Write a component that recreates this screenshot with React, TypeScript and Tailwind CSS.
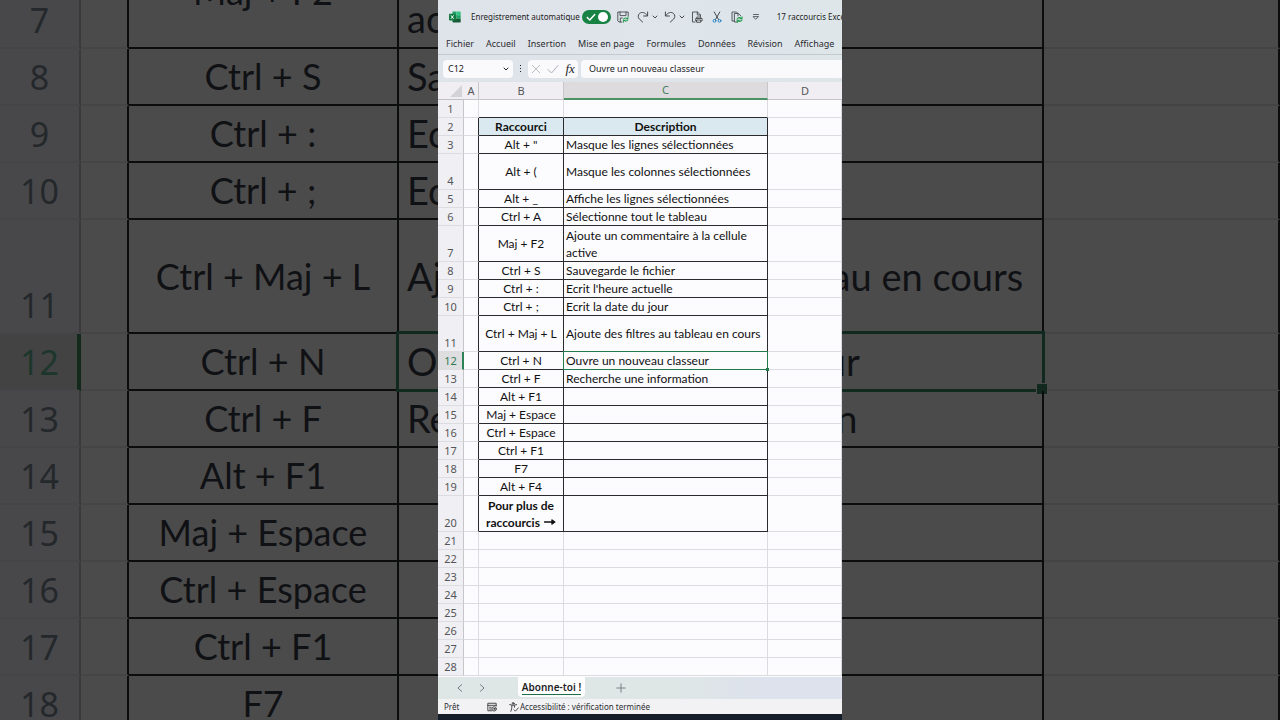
import type { ReactNode } from 'react';

type Row = {
  n: number;
  shortcut?: string;
  description?: string;
  tall?: boolean;
};

const rows: Row[] = [
  { n: 3, shortcut: 'Alt + "', description: 'Masque les lignes sélectionnées' },
  { n: 4, shortcut: 'Alt + (', description: 'Masque les colonnes sélectionnées', tall: true },
  { n: 5, shortcut: 'Alt + _', description: 'Affiche les lignes sélectionnées' },
  { n: 6, shortcut: 'Ctrl + A', description: 'Sélectionne tout le tableau' },
  { n: 7, shortcut: 'Maj + F2', description: 'Ajoute un commentaire à la cellule active', tall: true },
  { n: 8, shortcut: 'Ctrl + S', description: 'Sauvegarde le fichier' },
  { n: 9, shortcut: 'Ctrl + :', description: "Ecrit l'heure actuelle" },
  { n: 10, shortcut: 'Ctrl + ;', description: 'Ecrit la date du jour' },
  { n: 11, shortcut: 'Ctrl + Maj + L', description: 'Ajoute des filtres au tableau en cours', tall: true },
  { n: 12, shortcut: 'Ctrl + N', description: 'Ouvre un nouveau classeur' },
  { n: 13, shortcut: 'Ctrl + F', description: 'Recherche une information' },
  { n: 14, shortcut: 'Alt + F1' },
  { n: 15, shortcut: 'Maj + Espace' },
  { n: 16, shortcut: 'Ctrl + Espace' },
  { n: 17, shortcut: 'Ctrl + F1' },
  { n: 18, shortcut: 'F7' },
  { n: 19, shortcut: 'Alt + F4' },
];

const emptyRows = [21, 22, 23, 24, 25, 26, 27, 28];
const backdropRows = rows.filter((row) => row.n >= 7 && row.n <= 18);
const ribbonTabs = ['Fichier', 'Accueil', 'Insertion', 'Mise en page', 'Formules', 'Données', 'Révision', 'Affichage'];

const SELECTED = 12;

function Icon({ children, className = 'size-3' }: { children: ReactNode; className?: string }) {
  return (
    <svg
      viewBox="0 0 12 12"
      className={`shrink-0 ${className}`}
      fill="none"
      stroke="currentColor"
      strokeLinecap="round"
      strokeLinejoin="round"
      aria-hidden="true"
    >
      {children}
    </svg>
  );
}

function ExcelLogo() {
  return (
    <svg viewBox="0 0 12 12" className="size-3 shrink-0" aria-hidden="true">
      <path d="M3.5 0.5h4v3.7h-4z" fill="#21a366" />
      <path d="M7.5 0.5H11q.7 0 .7.7v3H7.5z" fill="#33c481" />
      <path d="M3.5 4.2h4v3.6h-4z" fill="#107c41" />
      <path d="M7.5 4.2h4.2v3.6H7.5z" fill="#21a366" />
      <path d="M3.5 7.8h8.2v3q0 .7-.7.7H4.2q-.7 0-.7-.7z" fill="#185c37" />
      <rect x="0" y="2.8" width="6.6" height="6.6" rx=".7" fill="#107c41" />
      <path d="M2 4.4l2.6 3.4M4.6 4.4L2 7.8" stroke="#fff" strokeWidth="1" />
    </svg>
  );
}

function Caret() {
  return (
    <Icon className="size-1.5">
      <path d="M2 4l4 4 4-4" strokeWidth="2" />
    </Icon>
  );
}

function TitleBar() {
  return (
    <div className="flex h-[33px] items-center pl-[11px] text-[#45494d]">
      <ExcelLogo />
      <label className="ml-2.5 flex shrink-0 items-center gap-0.5 whitespace-nowrap text-[8px] text-[#222]">
        Enregistrement automatique
        <span className="relative flex h-3.5 w-[29px] shrink-0 items-center rounded-full bg-[#178243]">
          <input type="checkbox" defaultChecked className="absolute inset-0 cursor-pointer appearance-none rounded-full" />
          <Icon className="pointer-events-none ml-1 size-2.5 text-white">
            <path d="M1.5 6.5l3 3 6-6.5" strokeWidth="1.8" />
          </Icon>
          <span className="pointer-events-none ml-0.5 size-2.5 rounded-full bg-white" />
        </span>
      </label>
      <div className="ml-1.5 flex shrink-0 items-center">
        <button aria-label="Enregistrer">
          <Icon>
            <path d="M4.8 11H2L.8 9.8V1h10.4v4M3 1v3.6h6V1M3.3 11V7h2" strokeWidth=".9" />
            <path d="M6.3 8q2.2-2.4 4.4-.3M11 5.8v2H9M11 9.2q-2.2 2.4-4.4.2M6.4 11.3v-2h2" stroke="#249b4b" strokeWidth="1" />
          </Icon>
        </button>
        <button aria-label="Rétablir" className="ml-2 flex items-center gap-[3px]">
          <Icon>
            <path d="M10.6 1v4h-4M10.4 4.7C8 .9 4.4.9 2.6 2.4C.8 4 .8 6.5 2.3 8L5.6 11" strokeWidth="1" />
          </Icon>
          <Caret />
        </button>
        <button aria-label="Annuler" className="ml-1.5 flex items-center gap-[3px]">
          <Icon>
            <path d="M1.4 1v4h4M1.6 4.7C4 .9 7.6.9 9.4 2.4C11.2 4 11.2 6.5 9.7 8L6.4 11" strokeWidth="1" />
          </Icon>
          <Caret />
        </button>
        <button aria-label="Aperçu avant impression" className="ml-1.5">
          <Icon>
            <path d="M4 11H1.5V1h5l3 3v1.5M6.3 1v3h3M5.8 7.5V6h4v1.5M5.800 10H4.700V7.500h6.400V10H9.800M6 9h3.600v2.300H6z" strokeWidth=".9" />
          </Icon>
        </button>
        <button aria-label="Couper" className="ml-2">
          <Icon>
            <path d="M3.2 1l4.3 7.500M8.800 1L4.500 8.500" strokeWidth="1" />
            <circle cx="3.5" cy="9.8" r="1.4" stroke="#2583c4" />
            <circle cx="8.5" cy="9.8" r="1.4" stroke="#2583c4" />
          </Icon>
        </button>
        <button aria-label="Actualiser la copie" className="ml-2">
          <Icon>
            <path d="M3 10H1V1h4.5l1 1M5.5 11H3.400V2.500h4l2.300 2.300M7 2.700v2.200" strokeWidth=".9" />
            <path d="M6 8q2.200-2.600 4.600-.3M11 5.700v2.100H9M11 9.200q-2.200 2.400-4.600.2M6.200 11.400v-2h2" stroke="#249b4b" strokeWidth="1.1" />
          </Icon>
        </button>
        <button aria-label="Personnaliser la barre d'outils" className="ml-2">
          <Icon className="size-2.5">
            <path d="M3 3h6M3 5.5h6L6 8.5z" strokeWidth="1" />
          </Icon>
        </button>
      </div>
      <span className="ml-4 whitespace-nowrap text-[8px] text-[#222]">17 raccourcis Excel</span>
    </div>
  );
}

function Ribbon() {
  return (
    <nav className="flex h-[22px] items-center gap-3 border-b border-[#c3c9ce] pl-2 text-[9px] text-[#2b2d30]">
      {ribbonTabs.map((tab) => (
        <button key={tab} className="whitespace-nowrap">{tab}</button>
      ))}
    </nav>
  );
}

function FormulaBar() {
  return (
    <div className="flex h-[27px] items-center pl-[5px] text-[#222]">
      <div className="flex h-[18px] w-[70px] shrink-0 items-center rounded-sm bg-[#fafafd] pr-1">
        <input aria-label="Zone Nom" defaultValue="C12" className="w-full min-w-0 bg-transparent pl-[5px] text-[9px] outline-none" />
        <button aria-label="Liste des noms"><Caret /></button>
      </div>
      <span className="flex w-[15px] shrink-0 flex-col items-center gap-0.5">
        <i className="size-px bg-[#222]" />
        <i className="size-px bg-[#222]" />
        <i className="size-px bg-[#222]" />
      </span>
      <div className="flex h-[18px] w-[50px] shrink-0 items-center justify-around rounded-sm bg-[#fafafd] text-[#b0b0b4]">
        <button aria-label="Annuler la saisie">
          <Icon className="size-2.5"><path d="M1.5 1.5l9 9M10.5 1.5l-9 9" /></Icon>
        </button>
        <button aria-label="Valider la saisie">
          <Icon><path d="M1 6.5l3.5 3.5L11 2.5" /></Icon>
        </button>
        <button aria-label="Insérer une fonction" className="font-['Liberation_Serif',serif] text-[13px] italic leading-none text-[#222]">
          fx
        </button>
      </div>
      <input
        aria-label="Barre de formule"
        defaultValue="Ouvre un nouveau classeur"
        className="ml-[3px] h-[18px] min-w-0 flex-1 rounded-l-sm bg-[#fafafd] pl-2 text-[9px] outline-none"
      />
    </div>
  );
}

const numberCell = "border-r border-b border-r-[#c6c5c9] border-b-[#dddce0] bg-[#f0eff3] p-0 text-center align-bottom font-['Noto_Sans',sans-serif] text-[11px] font-normal leading-[17px] text-[#55565a]";
const gridCell = 'border-r border-b border-[#dcdbdf] p-0';
const inkCell = 'border-r border-b border-[#2a2a2e] p-0';

function Sheet() {
  return (
    <table className="w-full table-fixed border-separate border-spacing-0 bg-[#fcfbfe] font-['Lato',sans-serif] text-[12px] leading-[18px] text-[#111]">
      <colgroup>
        <col className="w-[26px]" />
        <col className="w-[15px]" />
        <col className="w-[85px]" />
        <col className="w-[204px]" />
        <col />
      </colgroup>
      <thead>
        <tr className="h-[18px] bg-[#f0eef2] font-['Noto_Sans',sans-serif] text-[11px] leading-[17px] text-[#55565a]">
          <th className="border-b border-[#c0bfc3] p-0" aria-label="Tout sélectionner">
            <svg viewBox="0 0 12 12" className="ml-auto mr-0.5 size-3" aria-hidden="true">
              <path d="M12 0v12H0z" fill="#d3d2d6" />
            </svg>
          </th>
          <th className="border-b border-r border-[#c6c5c9] p-0 font-normal">A</th>
          <th className="border-b border-r border-[#c6c5c9] p-0 font-normal">B</th>
          <th className="border-b-2 border-r border-r-[#c6c5c9] border-b-[#4a9163] bg-[#dedbdf] p-0 font-normal leading-4 text-[#3f7d5b]">C</th>
          <th className="border-b border-[#c6c5c9] p-0 font-normal">D</th>
        </tr>
      </thead>
      <tbody>
        <tr className="h-[18px]">
          <th className={numberCell}>1</th>
          <td className={gridCell} />
          <td className="border-r border-b border-r-[#dcdbdf] border-b-[#2a2a2e] p-0" />
          <td className="border-r border-b border-r-[#dcdbdf] border-b-[#2a2a2e] p-0" />
          <td className={gridCell} />
        </tr>
        <tr className="h-[18px]">
          <th className={numberCell}>2</th>
          <td className="border-r border-b border-r-[#2a2a2e] border-b-[#dcdbdf] p-0" />
          <th className={`${inkCell} bg-[#d9e9ef] leading-[17px]`}>Raccourci</th>
          <th className={`${inkCell} bg-[#d9e9ef] leading-[17px]`}>Description</th>
          <td className={gridCell} />
        </tr>
        {rows.map((row) => (
          <tr key={row.n} className={row.tall ? 'h-9' : 'h-[18px]'}>
            {row.n === SELECTED ? (
              <th className="border-b border-r-2 border-b-[#dddce0] border-r-[#2f8257] bg-[#dedde0] p-0 pl-px text-center align-bottom font-['Noto_Sans',sans-serif] text-[11px] font-normal leading-[17px] text-[#2f7a55]">
                {row.n}
              </th>
            ) : (
              <th className={numberCell}>{row.n}</th>
            )}
            <td className="border-r border-b border-r-[#2a2a2e] border-b-[#dcdbdf] p-0" />
            <td className={`${inkCell} whitespace-nowrap text-center leading-[17px]`}>{row.shortcut}</td>
            <td className={`${inkCell} relative pl-0.5 leading-[17px]`}>
              {row.description}
              {row.n === SELECTED && (
                <span className="absolute -inset-px z-10 border border-[#217a4c]">
                  <span className="absolute -bottom-0.5 -right-0.5 size-[3px] bg-[#217a4c]" />
                </span>
              )}
            </td>
            <td className={gridCell} />
          </tr>
        ))}
        <tr className="h-9">
          <th className={numberCell}>20</th>
          <td className="border-r border-b border-r-[#2a2a2e] border-b-[#dcdbdf] p-0" />
          <td className={`${inkCell} text-center font-bold leading-[17px]`}>
            Pour plus de
            <span className="flex items-center justify-center gap-1">
              raccourcis
              <Icon>
                <path d="M.5 6h10M8 4l2.8 2L8 8z" strokeWidth="1.4" />
              </Icon>
            </span>
          </td>
          <td className={inkCell} />
          <td className={gridCell} />
        </tr>
        {emptyRows.map((n) => (
          <tr key={n} className="h-[18px]">
            <th className={numberCell}>{n}</th>
            <td className={gridCell} />
            <td className={gridCell} />
            <td className={gridCell} />
            <td className={gridCell} />
          </tr>
        ))}
      </tbody>
    </table>
  );
}

function SheetTabs() {
  return (
    <div className="flex h-[22px] shrink-0 items-start bg-linear-to-r from-[#dfe6e6] from-60% to-[#dde2ec] to-80% text-[#7b8084]">
      <div className="flex h-full w-20 shrink-0 items-center gap-3 pl-[17px]">
        <button aria-label="Feuille précédente">
          <Icon className="size-2.5"><path d="M8 2L3.5 6 8 10" strokeWidth="1.2" /></Icon>
        </button>
        <button aria-label="Feuille suivante">
          <Icon className="size-2.5"><path d="M4 2l4.5 4L4 10" strokeWidth="1.2" /></Icon>
        </button>
      </div>
      <button className="flex h-5 w-[67px] items-center justify-center rounded-b-sm bg-[#fdfdfe] text-[#1f1f1f]">
        <span className="border-b border-[#1d7044] text-[10px] font-semibold leading-[14px]">Abonne-toi !</span>
      </button>
      <button aria-label="Nouvelle feuille" className="ml-[31px] mt-1.5">
        <Icon className="size-2.5"><path d="M6 1v10M1 6h10" strokeWidth="1.2" /></Icon>
      </button>
    </div>
  );
}

function StatusBar() {
  return (
    <div className="flex h-[15px] shrink-0 items-center bg-[#f2f2f5] pl-1.5 text-[8px] leading-none text-[#2c2c2f]">
      <span className="w-[43px]">Prêt</span>
      <Icon className="size-2.5">
        <path d="M11 5V1.5H1v9h4.5M1 4h10M3 6.3h2M3 8.4h2" />
        <circle cx="8.5" cy="8.3" r="2.6" />
        <circle cx="8.5" cy="8.3" r=".6" />
      </Icon>
      <span className="ml-3 flex items-center gap-px whitespace-nowrap">
        <Icon className="size-2.5">
          <circle cx="5" cy="1.7" r="1.1" />
          <path d="M.8 3.2Q5 5 9.2 3.2M3.4 4.2v3l-1.2 4M6.6 4.3v2M6 9.3l1.7 1.7L11.2 7" />
        </Icon>
        Accessibilité : vérification terminée
      </span>
    </div>
  );
}

const backdropNumber = "border-r-2 border-b-2 border-r-[#3a3a3c] border-b-[#454547] bg-[#48484b] p-0 text-center align-bottom font-['Noto_Sans',sans-serif] text-[34px] font-normal leading-[54px] text-[#24282b]";
const backdropInk = 'border-r-2 border-b-2 border-[#0b0c0c] p-0';

// Dimmed close-up of the same sheet, filling the window behind the spreadsheet
function Backdrop() {
  return (
    <div className="absolute inset-0 overflow-hidden bg-[#4b4b4b]" aria-hidden="true">
      <table className="-mt-[65px] w-full table-fixed border-separate border-spacing-0 font-['Lato',sans-serif] text-[38px] leading-[55px] text-[#101114]">
        <colgroup>
          <col className="w-[81px]" />
          <col className="w-12" />
          <col className="w-[270px]" />
          <col className="w-[645px]" />
          <col />
        </colgroup>
        <tbody>
          {backdropRows.map((row) => (
            <tr key={row.n} className={row.tall ? 'h-[114px]' : 'h-[57px]'}>
              {row.n === SELECTED ? (
                <th className="border-r-4 border-b-2 border-r-[#12291c] border-b-[#454547] bg-[#434343] p-0 pl-0.5 text-center align-bottom font-['Noto_Sans',sans-serif] text-[34px] font-normal leading-[54px] text-[#1d362b]">
                  {row.n}
                </th>
              ) : (
                <th className={backdropNumber}>{row.n}</th>
              )}
              <td className="border-r-2 border-b-2 border-r-[#0b0c0c] border-b-[#454547] p-0" />
              <td className={`${backdropInk} whitespace-nowrap text-center text-[36px]`}>{row.shortcut}</td>
              <td className={`${backdropInk} relative pl-2`}>
                {row.description}
                {row.n === SELECTED && (
                  <span className="absolute -inset-[3px] border-3 border-[#11291e]">
                    <span className="absolute -bottom-1.5 -right-1.5 size-3 border border-[#4b4b4b] bg-[#11291e]" />
                  </span>
                )}
              </td>
              <td className="border-r-2 border-b-2 border-r-[#0b0c0c] border-b-[#444446] p-0" />
            </tr>
          ))}
        </tbody>
      </table>
    </div>
  );
}

function App() {
  return (
    <div className="relative h-screen overflow-hidden font-['Noto_Sans','Open_Sans',sans-serif]">
      <Backdrop />
      <main className="relative mx-auto flex h-full w-full max-w-[404px] flex-col overflow-hidden bg-[#fcfbfe]">
        <header className="shrink-0 overflow-hidden bg-linear-to-r from-[#dfe3ea] to-[#dee6ea]">
          <TitleBar />
          <Ribbon />
          <FormulaBar />
        </header>
        <div className="min-h-0 flex-1 overflow-hidden">
          <Sheet />
        </div>
        <SheetTabs />
        <StatusBar />
        <div className="h-1.5 shrink-0 bg-[#141d29]" />
      </main>
    </div>
  );
}

export default App;
